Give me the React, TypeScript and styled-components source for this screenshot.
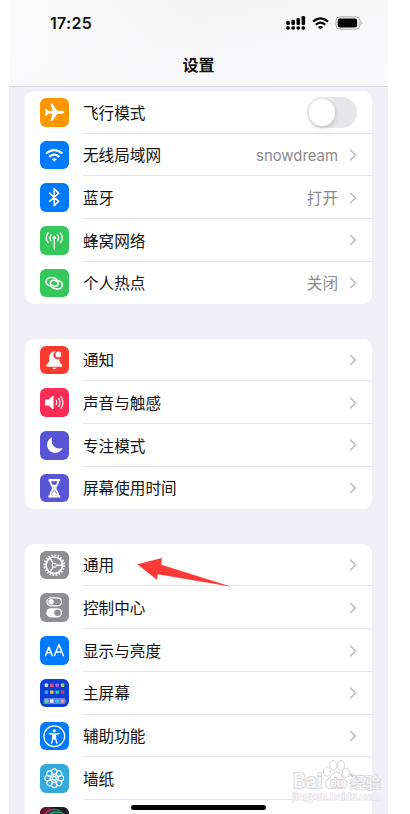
import React from 'react';
import styled, { createGlobalStyle } from 'styled-components';

const GlobalStyle = createGlobalStyle`
  * { box-sizing: border-box; }
  body {
    margin: 0;
    background: #fff;
    font-family: Inter, "Noto Sans CJK SC", sans-serif;
    color: #111;
    overflow: hidden;
  }
`;

const Phone = styled.main`
  position: relative;
  width: 379px;
  height: 814px;
  margin-left: 9px;
  background: #f0eff5;
  overflow: hidden;
  display: flex;
  flex-direction: column;
`;

const Header = styled.header`
  flex: none;
  height: 87px;
  border-bottom: 1px solid #d9d9de;
  background: linear-gradient(170deg, rgba(250, 250, 252, 0) 10%, #fafafc 85%),
    linear-gradient(90deg, #fcfcfd 0%, #f8f8f9 25%, #f3f3f4 50%, #f4f4f5 100%);
`;

const StatusBar = styled.div`
  display: flex;
  align-items: center;
  justify-content: space-between;
  height: 46px;
  padding: 0 25.5px 0 41px;
`;

const Clock = styled.span`
  font-size: 16px;
  font-weight: 600;
  letter-spacing: 0.3px;
`;

const StatusIcons = styled.div`
  display: flex;
  align-items: center;
  gap: 6px;
  svg { display: block; }
`;

const Title = styled.h1`
  margin: 6px 0 0;
  text-align: center;
  font-size: 16px;
  line-height: 26px;
  font-weight: 600;
`;

const Groups = styled.div`
  display: flex;
  flex-direction: column;
  gap: 34.3px;
  padding: 4px 16px 0;
`;

const Card = styled.section`
  background: #fff;
  border-radius: 9px;
  overflow: hidden;
`;

const Row = styled.div`
  display: flex;
  height: 42.7px;
  padding-left: 15px;
`;

const Tile = styled.div<{ $bg: string }>`
  flex: none;
  width: 28.5px;
  height: 28.5px;
  margin: 7px 14.5px 0 0;
  border-radius: 6px;
  background: ${(p) => p.$bg};
  overflow: hidden;
  svg { display: block; width: 100%; height: 100%; }
`;

const RowBody = styled.div<{ $last: boolean }>`
  flex: 1;
  display: flex;
  align-items: center;
  padding: 1px 15.5px 0 0;
  border-bottom: 1px solid ${(p) => (p.$last ? 'transparent' : '#e6e6e8')};
`;

const Label = styled.span`
  flex: 1;
  font-size: 15.6px;
  line-height: 24px;
  padding-top: 2.6px;
`;

const Value = styled.span<{ $latin: boolean }>`
  margin-right: 10.5px;
  padding-top: 2.6px;
  font-size: ${(p) => (p.$latin ? '14.9px' : '15.6px')};
  line-height: 24px;
  color: #8a8a8e;
`;

const Switch = styled.div`
  width: 50px;
  height: 30.5px;
  padding: 2px;
  border-radius: 16px;
  background: #e7e7e9;
`;

const Knob = styled.div`
  width: 26.5px;
  height: 26.5px;
  border-radius: 50%;
  background: #fff;
  box-shadow: 1px 2px 4px rgba(0, 0, 0, 0.16);
`;

const HomeIndicator = styled.div`
  position: absolute;
  left: 122px;
  top: 805px;
  width: 135px;
  height: 5px;
  border-radius: 3px;
  background: #000;
`;

const Pointer = styled.svg`
  position: absolute;
  left: 128px;
  top: 557px;
`;

const Watermark = styled.svg`
  position: absolute;
  left: 282px;
  top: 757px;
`;

const Chevron = () => (
  <svg width="8" height="12" viewBox="0 0 8 12" fill="none" stroke="#c2c2c5" strokeWidth="1.7">
    <path d="M1.1 .8 6.5 6 1.1 11.2" />
  </svg>
);

const stroke = { fill: 'none', stroke: '#fff', strokeLinecap: 'round', strokeLinejoin: 'round' } as const;

const Plane = () => (
  <svg viewBox="0 0 28 28" fill="#fff">
    <path d="M23.8 14c0 .9-1.300 1.500-2.700 1.500h-4.200l-4.600 6.900H10.200l2.200-6.900-4.400-.2-1.900 2.500H4.900L5.700 14 4.900 10.200h1.200L8 12.700l4.400-.2-2.200-6.900h2.100l4.600 6.900h4.200c1.400 0 2.700.6 2.700 1.500Z" />
  </svg>
);

const Wifi = () => (
  <svg viewBox="0 0 28 28" {...stroke} strokeLinecap="butt" strokeWidth="2.1">
    <path d="M6 12.300q8-6.800 16 0M9 15.600q5-4.300 10 0" />
    <path d="M11.500 17.900q2.500-1.900 5 0L14 20.500Z" fill="#fff" stroke="none" />
  </svg>
);

const Bluetooth = () => (
  <svg viewBox="0 0 28 28" {...stroke} strokeWidth="1.6">
    <path d="m9.500 10 8.800 8-4.300 4.300V5.700l4.300 4.300-8.800 8" />
  </svg>
);

const Antenna = () => (
  <svg viewBox="0 0 28 28" {...stroke} strokeWidth="1.35">
    <path d="M14 12v10.500M10.800 8.500q-2 3 0 6M17.200 8.500q2 3 0 6M8 6.700q-3.800 4.800 0 9.600M20 6.700q3.800 4.800 0 9.600" />
    <circle cx="14" cy="11.500" r="1.700" fill="#fff" stroke="none" />
  </svg>
);

const Hotspot = () => (
  <svg viewBox="0 0 28 28" {...stroke} strokeWidth="1.5">
    <path d="M10.700 16.500C8 16.200 6 14.700 6 12.500c0-2.500 2.300-4.100 5.200-4.100 3.700 0 6.700 2.500 6.700 5.300 0 1.900-1.400 3.200-3.400 3.200-1.200 0-2.200-.5-2.900-1.200" />
    <path d="M17.300 11.500c2.700.3 4.700 1.800 4.700 4 0 2.500-2.300 4.100-5.200 4.100-3.700 0-6.700-2.500-6.700-5.300 0-1.900 1.400-3.200 3.400-3.200 1.200 0 2.200.5 2.900 1.200" />
  </svg>
);

const Bell = () => (
  <svg viewBox="0 0 28 28" fill="#fff">
    <path d="M15.400 5.300C11.500 5 9 7.800 9 11.500v3.200c0 1.700-2.800 3-2.800 4.800 0 .6.400.8 1 .8h13.600c.6 0 1-.2 1-.8 0-1.800-2.800-3.100-2.800-4.800v-2.200a3.900 3.900 0 0 1-3.600-7.200Z" />
    <path d="M11.800 21.300h4.500q-2.200 2.700-4.500 0Z" />
    <circle cx="18" cy="8.300" r="2.800" />
  </svg>
);

const Speaker = () => (
  <svg viewBox="0 0 28 28" {...stroke} strokeWidth="1.200">
    <path d="M5.500 11.800h3.200l4-3.500v11.800l-4-3.500H5.500Z" fill="#fff" />
    <path d="M15.900 11.900q1.400 2.200 0 4.500M18.300 10.200q2.800 4 0 7.900M20.700 8.700q4 5.500 0 11" />
  </svg>
);

const Moon = () => (
  <svg viewBox="0 0 28 28" fill="#fff">
    <path d="M12 6.100C9 7.300 7 10.200 7 13.500c0 4.500 3.500 8 8 8 3.200 0 6-1.900 7.200-4.700-.8.300-1.800.5-2.800.5-4.400 0-7.900-3.300-7.900-7.700 0-1.200.2-2.400.5-3.500Z" />
  </svg>
);

const Hourglass = () => (
  <svg viewBox="0 0 28 28" {...stroke} strokeWidth="1.8">
    <path d="M9.200 6h9.600M9.200 22h9.600" strokeWidth="2.400" />
    <path d="M10 6.500c0 4 2.800 5.200 2.800 7.500S10 17.500 10 21.500M18 6.500c0 4-2.800 5.200-2.800 7.500s2.800 3.500 2.800 7.500" />
    <path d="M11.500 10.500h5L14.500 14v3c.8 1.700 2.200 2 2.500 4h-6c.3-2 1.700-2.300 2.500-4v-3Z" fill="#fff" stroke="none" />
  </svg>
);

const Gear = () => (
  <svg viewBox="0 0 28 28" {...stroke}>
    <circle cx="14" cy="14" r="8.100" strokeWidth="1.700" />
    <circle cx="14" cy="14" r="9.700" strokeWidth="1.900" strokeLinecap="butt" strokeDasharray="1.6 1.447" />
    <circle cx="14" cy="14" r="2" strokeWidth="1" />
    <path d="M16.200 14h5.500M12.900 12.100 10 7.300M12.900 15.900 10 20.700" strokeWidth="1.300" />
  </svg>
);

const Toggles = () => (
  <svg viewBox="0 0 28 28" {...stroke}>
    <rect x="6.800" y="4.800" width="14.400" height="7.800" rx="3.900" strokeWidth="1.200" />
    <circle cx="10.900" cy="8.700" r="2.700" fill="#fff" stroke="none" />
    <rect x="6.200" y="15" width="15.600" height="9" rx="4.500" fill="#fff" stroke="none" />
    <circle cx="17.200" cy="19.500" r="3.200" fill="#8e8e93" stroke="none" />
  </svg>
);

const TextSize = () => (
  <svg viewBox="0 0 28 28" {...stroke} strokeWidth="1.500">
    <path d="m5.400 19.200 3.300-8.300 3.300 8.300M6.500 16.500h4.400M14.300 19.200l4.300-10.900 4.300 10.900M15.700 15.800h5.900" />
  </svg>
);

const appColors = [
  ['#d5d8e5', '#f25068', '#b45cec', '#a4d65a'],
  ['#27b4ed', '#fdbd25', '#35d0a5', '#ee3e45'],
  ['#57df85', '#eef1ff', '#30c5f3', '#f49c65'],
];
const HomeScreen = () => (
  <svg viewBox="0 0 28 28">
    <rect x="3.500" y="18.700" width="21.500" height="5.800" rx="1.500" fill="#6c82df" />
    {appColors.map((line, y) =>
      line.map((color, x) => (
        <rect key={color} x={4.600 + x * 5.300} y={[4.500, 11.200, 19.900][y]} width="3.400" height="3.400" rx=".7" fill={color} />
      )),
    )}
  </svg>
);

const Accessibility = () => (
  <svg viewBox="0 0 28 28" {...stroke}>
    <circle cx="14" cy="14" r="10.200" strokeWidth="1.300" />
    <circle cx="14" cy="8.600" r="1.600" fill="#fff" stroke="none" />
    <path d="M9.200 11.500q4.800 1 9.600 0" strokeWidth="1.300" />
    <path d="M12.800 12.200v4l-1.500 4.600M15.200 12.200v4l1.500 4.600" strokeWidth="1.300" />
    <path d="M12.200 12h3.600v4.500l-1.800.9-1.800-.9Z" fill="#fff" stroke="none" />
  </svg>
);

const Flower = () => (
  <svg viewBox="0 0 28 28" {...stroke} strokeWidth="1.100">
    {[0, 45, 90, 135, 180, 225, 270, 315].map((angle) => (
      <circle key={angle} cx="14" cy="7.500" r="2.700" transform={`rotate(${angle} 14 14)`} />
    ))}
    {[22.5, 67.5, 112.5, 157.5, 202.5, 247.5, 292.5, 337.5].map((angle) => (
      <path key={angle} d="M14 9.700V12" strokeWidth=".9" transform={`rotate(${angle} 14 14)`} />
    ))}
    <circle cx="14" cy="14" r="1.900" />
  </svg>
);

const Siri = () => (
  <svg viewBox="0 0 28 28" fill="none">
    <path d="M0 0h12L4 12H0Z" fill="#5e1732" />
    <circle cx="14" cy="13" r="10.800" fill="#174c43" stroke="#35775f" strokeWidth="1" />
    <path d="M3.500 10C5.500 4 10 2.300 14 2.300" stroke="#b62954" strokeWidth="1.500" />
    <path d="M7 11c3-7 10-7 15-5" stroke="#299674" strokeWidth="1.500" />
  </svg>
);

interface Item {
  label: string;
  bg: string;
  icon: React.ReactNode;
  value?: string;
  toggle?: boolean;
}

const groups: Item[][] = [
  [
    { label: '飞行模式', bg: '#ff9702', icon: <Plane />, toggle: true },
    { label: '无线局域网', bg: '#007aff', icon: <Wifi />, value: 'snowdream' },
    { label: '蓝牙', bg: '#007aff', icon: <Bluetooth />, value: '打开' },
    { label: '蜂窝网络', bg: '#34c759', icon: <Antenna /> },
    { label: '个人热点', bg: '#34c759', icon: <Hotspot />, value: '关闭' },
  ],
  [
    { label: '通知', bg: '#ff3b30', icon: <Bell /> },
    { label: '声音与触感', bg: '#ff2d55', icon: <Speaker /> },
    { label: '专注模式', bg: '#5856d6', icon: <Moon /> },
    { label: '屏幕使用时间', bg: '#5856d6', icon: <Hourglass /> },
  ],
  [
    { label: '通用', bg: '#8e8e93', icon: <Gear /> },
    { label: '控制中心', bg: '#8e8e93', icon: <Toggles /> },
    { label: '显示与亮度', bg: '#007aff', icon: <TextSize /> },
    { label: '主屏幕', bg: '#0b3fd6', icon: <HomeScreen /> },
    { label: '辅助功能', bg: '#007aff', icon: <Accessibility /> },
    { label: '墙纸', bg: '#34aadc', icon: <Flower /> },
    { label: '', bg: '#171c25', icon: <Siri /> },
  ],
];

const Signal = () => (
  <svg width="20" height="14" viewBox="0 0 20 14">
    {[4, 5.200, 7, 9].map((h, i) => (
      <g key={h}>
        <rect x={0.300 + i * 5.100} y={9 - h} width="3.500" height={h} rx="1.200" />
        <rect x={0.300 + i * 5.100} y="10.200" width="3.500" height="3.500" rx="1.400" />
      </g>
    ))}
  </svg>
);

const StatusWifi = () => (
  <svg width="17" height="13" viewBox="0 0 17 13" fill="none" stroke="#000" strokeWidth="2.100">
    <path d="M1 4.600q7.500-6.400 15 0M3.800 7.700q4.700-4 9.400 0" />
    <path d="M5.900 9.900q2.600-2 5.200 0L8.500 12.600Z" fill="#000" stroke="none" />
  </svg>
);

const Battery = () => (
  <svg width="28" height="14" viewBox="0 0 28 14">
    <rect x="1" y=".9" width="24" height="12.200" rx="3.800" fill="#f8f8f9" stroke="#a7a7a8" />
    <rect x="2.700" y="2.500" width="19.500" height="9" rx="2.200" />
    <path d="M26.300 5q2.200 1.900 0 3.900Z" fill="#a7a7a8" />
  </svg>
);

export default function App() {
  return (
    <>
      <GlobalStyle />
      <Phone>
        <Header>
          <StatusBar>
            <Clock>17:25</Clock>
            <StatusIcons><Signal /><StatusWifi /><Battery /></StatusIcons>
          </StatusBar>
          <Title>设置</Title>
        </Header>
        <Groups>
          {groups.map((items, g) => (
            <Card key={g}>
              {items.map((item, i) => (
                <Row key={i}>
                  <Tile $bg={item.bg}>{item.icon}</Tile>
                  <RowBody $last={i === items.length - 1}>
                    <Label>{item.label}</Label>
                    {item.value && <Value $latin={/^\w+$/.test(item.value)}>{item.value}</Value>}
                    {item.toggle ? <Switch><Knob /></Switch> : <Chevron />}
                  </RowBody>
                </Row>
              ))}
            </Card>
          ))}
        </Groups>
        <Pointer width="96" height="32" viewBox="0 0 96 32">
          <path d="M.3 7.300 24.900 1 24.300 7.800 94.500 29.700 20.800 17.300 19.800 22.700Z" fill="#fd3a37" />
        </Pointer>
        <Watermark width="98" height="48" viewBox="0 0 98 48" fill="#fff" fillOpacity=".8" stroke="#dadadc" strokeWidth="1.800" paintOrder="stroke">
          <text x="2" y="31" fontSize="19.500" fontWeight="600" fontFamily="Inter" textLength="29" lengthAdjust="spacingAndGlyphs">Bai</text>
          <ellipse cx="36" cy="14.500" rx="3.100" ry="4.200" />
          <ellipse cx="42.200" cy="8.500" rx="3.100" ry="4.500" />
          <ellipse cx="50" cy="8.500" rx="3.100" ry="4.500" />
          <ellipse cx="55" cy="15.800" rx="3.100" ry="4.200" />
          <path d="M45.500 15.500c4 0 5.500 5 8.200 7.500 3.800 3.500 1.500 8.300-2.700 8.100-4-.5-7-.5-11 0-5 .3-7.300-4.800-3.300-8.100 3.300-2.500 4.300-7.500 8.800-7.500Z" />
          <text x="39.200" y="29.500" fontSize="11.500" fontWeight="600" fontFamily="Inter" textLength="13" lengthAdjust="spacingAndGlyphs">du</text>
          <text x="59.500" y="30.500" fontSize="15" fontWeight="500" fontFamily="Noto Sans CJK SC" textLength="30" lengthAdjust="spacingAndGlyphs">经验</text>
          <text x="1.500" y="42.500" fontSize="9.500" fontWeight="500" fontFamily="Inter" strokeWidth="1.200" stroke="#e2e2e4" textLength="88" lengthAdjust="spacingAndGlyphs">jingyan.baidu.com</text>
        </Watermark>
        <HomeIndicator />
      </Phone>
    </>
  );
}
